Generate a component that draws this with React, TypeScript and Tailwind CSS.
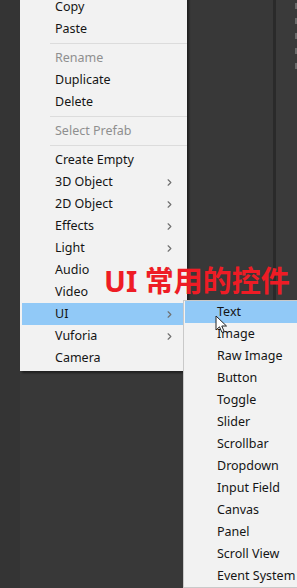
import { ChevronRight } from "lucide-react"

type Item = { label: string; disabled?: boolean; sub?: boolean; active?: boolean } | "sep"

const mainItems: Item[] = [
  { label: "Copy" },
  { label: "Paste" },
  "sep",
  { label: "Rename", disabled: true },
  { label: "Duplicate" },
  { label: "Delete" },
  "sep",
  { label: "Select Prefab", disabled: true },
  "sep",
  { label: "Create Empty" },
  { label: "3D Object", sub: true },
  { label: "2D Object", sub: true },
  { label: "Effects", sub: true },
  { label: "Light", sub: true },
  { label: "Audio", sub: true },
  { label: "Video" },
  { label: "UI", sub: true, active: true },
  { label: "Vuforia", sub: true },
  { label: "Camera" },
]

const uiItems = [
  "Text", "Image", "Raw Image", "Button", "Toggle", "Slider", "Scrollbar",
  "Dropdown", "Input Field", "Canvas", "Panel", "Scroll View", "Event System",
]

function MenuRow({ item }: { item: Item }) {
  if (item === "sep") {
    return <div className="h-[7px] flex items-center pl-[30px]"><div className="h-px w-full bg-[#dcdcdc]" /></div>
  }
  return (
    <div className={`h-[22px] mx-[2px] flex items-center pl-[33px] pr-[10px] ${item.active ? "bg-[#91c9f7]" : ""}`}>
      <span className={`flex-1 ${item.disabled ? "text-[#8f8f8f]" : "text-[#151515]"}`}>{item.label}</span>
      {item.sub && <ChevronRight size={11} strokeWidth={2.5} className="text-[#6f6f6f]" />}
    </div>
  )
}

export default function App() {
  return (
    <div className="relative w-[297px] h-[588px] overflow-hidden bg-[#383838] font-['Noto_Sans',sans-serif] text-[12.5px]">
      <div className="flex h-full">
        <div className="w-[20px] bg-[#343434]" />
        <div className="w-[253px]" />
        <div className="w-[3px] bg-[#2a2a2a]" />
        <div className="flex-1 bg-[#3a3a3a] flex flex-col items-end gap-[9px] pt-[3px]">
          {[0, 1, 2, 3, 4].map((i) => <div key={i} className="w-[2px] h-[6px] bg-[#6a6a6a]" />)}
        </div>
      </div>

      {/* main context menu */}
      <div className="absolute left-[20px] top-[-4px] w-[167px] bg-[#f2f2f2] pb-[2px] shadow-[2px_2px_2px_rgba(0,0,0,0.45)]">
        {mainItems.map((item, i) => <MenuRow key={i} item={item} />)}
      </div>

      {/* UI submenu */}
      <div className="absolute left-[183px] top-[300px] w-[120px] bg-[#f2f2f2] border border-[#c9c9c9]">
        {uiItems.map((label, i) => (
          <div key={label} className={`h-[22px] ml-[1px] flex items-center pl-[32px] ${i === 0 ? "bg-[#91c9f7]" : ""}`}>
            <span className="text-[#151515] whitespace-nowrap">{label}</span>
          </div>
        ))}
      </div>

      {/* cursor */}
      <svg className="absolute left-[215px] top-[315px]" width="13" height="19" viewBox="0 0 13 19">
        <path d="M1 1 L1 15 L4.5 11.8 L7 17.5 L9.2 16.5 L6.8 11 L11.5 11 Z" fill="#ffffff" stroke="#222222" strokeWidth="1" strokeLinejoin="round" />
      </svg>

      {/* annotation */}
      <div className="absolute left-[104px] top-[261px] text-[29px] leading-[40px] font-bold text-[#ee1c25] font-['Noto_Sans','Noto_Sans_CJK_SC',sans-serif] whitespace-nowrap">
        UI 常用的控件
      </div>
    </div>
  )
}
